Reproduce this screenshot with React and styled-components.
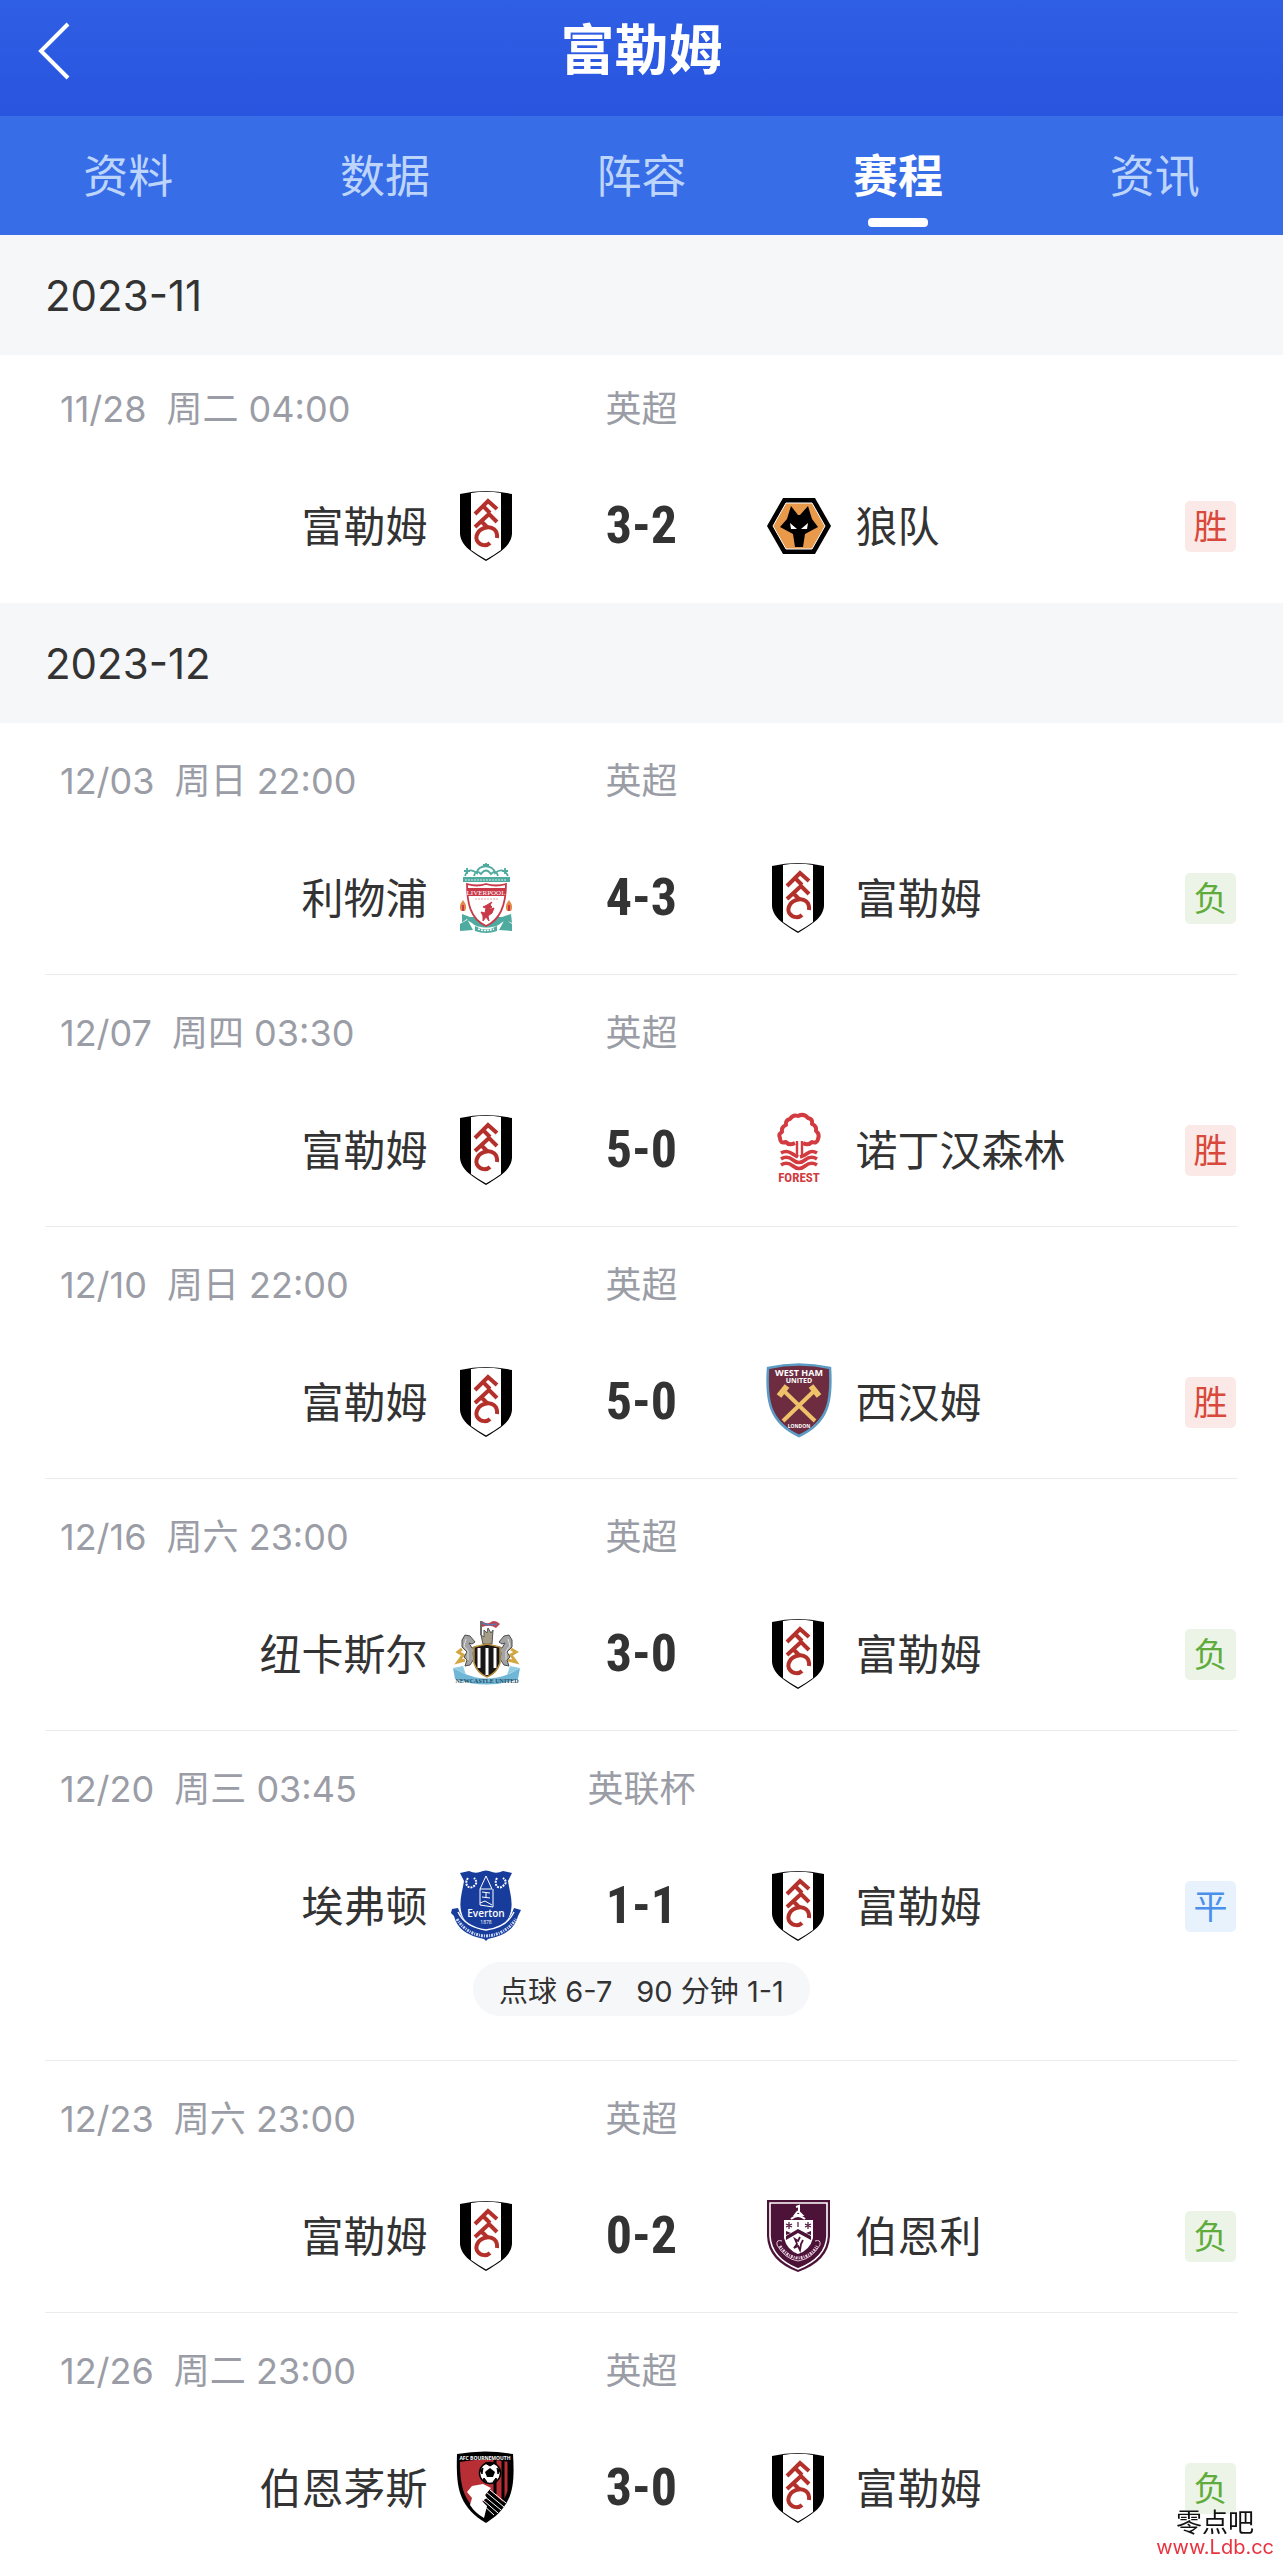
import React, { useState } from 'react'
import styled, { createGlobalStyle } from 'styled-components'

const tabs = ['资料', '数据', '阵容', '赛程', '资讯']

const months = [
  {
    month: '2023-11',
    matches: [
      { date: '11/28', time: '周二 04:00', league: '英超', home: 'fulham', away: 'wolves', score: '3-2', result: 'win' },
    ],
  },
  {
    month: '2023-12',
    matches: [
      { date: '12/03', time: '周日 22:00', league: '英超', home: 'liverpool', away: 'fulham', score: '4-3', result: 'lose' },
      { date: '12/07', time: '周四 03:30', league: '英超', home: 'fulham', away: 'forest', score: '5-0', result: 'win' },
      { date: '12/10', time: '周日 22:00', league: '英超', home: 'fulham', away: 'westham', score: '5-0', result: 'win' },
      { date: '12/16', time: '周六 23:00', league: '英超', home: 'newcastle', away: 'fulham', score: '3-0', result: 'lose' },
      { date: '12/20', time: '周三 03:45', league: '英联杯', home: 'everton', away: 'fulham', score: '1-1', result: 'draw', notes: ['点球 6-7', '90 分钟 1-1'] },
      { date: '12/23', time: '周六 23:00', league: '英超', home: 'fulham', away: 'burnley', score: '0-2', result: 'lose' },
      { date: '12/26', time: '周二 23:00', league: '英超', home: 'bournemouth', away: 'fulham', score: '3-0', result: 'lose' },
    ],
  },
]

const results = {
  win: { text: '胜', color: '#d8493c', bg: '#fbe9e7' },
  lose: { text: '负', color: '#5fab3c', bg: '#ebf4e7' },
  draw: { text: '平', color: '#4a90ea', bg: '#e8f2fd' },
}

const Fulham = () => (
  <StLogo viewBox="0 0 72 72" aria-hidden="true">
    <path d="M10 4Q36-2 62 4V44C61 56 49 63 36 71C23 63 11 56 10 44Z" fill="#000" />
    <path d="M21 3Q36 .5 51 3V60Q44 65 36 69.5Q28 65 21 60Z" fill="#fff" />
    <g fill="none" stroke="#b3312a" strokeWidth="4">
      <path d="M25 24L38 11L47 19M33 16L40 23" />
      <path d="M25 37L39 24L47 32M31 31L38 38" />
      <path d="M47 48C48 40 42 36 36 37.5C28 39 24 47 28 52C31 56 37 56 40 53" />
    </g>
  </StLogo>
)

const Wolves = () => (
  <StLogo viewBox="0 0 72 72" aria-hidden="true">
    <path d="M21 8H53L69 36L53 64H21L5 36Z" fill="#000" />
    <path d="M24 13H50L63 36L50 59H24L11 36Z" fill="#e9994a" stroke="#fff" />
    <path d="M29 16L36 25H38L46 16L50 29L56 37L43 44L41 57H33L31 44L18 37L25 29Z" fill="#000" />
    <path d="M28 33L35 39H29ZM46 33L39 39H45Z" fill="#fff" />
  </StLogo>
)

const Liverpool = () => (
  <StLogo viewBox="0 0 72 72" aria-hidden="true">
    <g fill="none" stroke="#4fab9f" strokeWidth="1.8">
      <path d="M15 14C18 5 24 9 27 11C27 2 44 2 45 11C49 8 54 6 58 14" />
      <path d="M36 1V5M33 3H39M17 6V12M14 9H20M55 6V12M52 9H58" />
      <path d="M24 14Q26 7 31 12Q36 5 41 12Q46 7 48 14" />
    </g>
    <path d="M13 15H60V20H13Z" fill="#4fab9f" />
    <path d="M15 18H57" stroke="#d7eeea" strokeDasharray="2 1" />
    <path d="M12 52V61L17 58L22 61C27 67 46 67 51 61L56 58L62 61L61 52L52 55L20 55ZM10 62L17 57L23 68L10 69ZM62 62L55 57L49 68L62 69Z" fill="#4fab9f" />
    <path d="M17 22Q27 25 36 22Q46 25 56 22C56 40 52 57 36 64C20 57 17 40 17 22Z" fill="#fff" stroke="#c93848" strokeWidth="1.8" />
    <path d="M18 26H55V34H18Z" fill="#c93848" />
    <text x="36" y="33" textAnchor="middle" fontSize="7" fontFamily="Liberation Serif, serif" fill="#fff">LIVERPOOL</text>
    <path d="M25 37H48" stroke="#e7a1a8" strokeDasharray="2 1" />
    <path d="M42 40L40 43L42 45L38 48L44 46L42 51L38 54L39 59L36 55L33 59L33 54L31 50L35 51L36 46L33 45L37 43Z" fill="#c93848" stroke="#c93848" />
    <path d="M13 38Q18 44 15 49H11Q8 44 13 38ZM59 38Q64 44 61 49H57Q54 44 59 38Z" fill="#e48a49" />
    <path d="M13 43V49M59 43V49" stroke="#c93848" strokeWidth="2" />
    <path d="M25 64Q36 71 47 64V69Q36 73 25 69Z" fill="#4fab9f" />
    <path d="M28 67Q36 70 44 67" fill="none" stroke="#fff" strokeWidth="1.5" strokeDasharray="2 1" />
  </StLogo>
)

const Forest = () => (
  <StLogo viewBox="0 0 72 72" aria-hidden="true">
    <g fill="none" stroke="#d23b40">
      <path d="M33 29Q27 32 24 28Q18 30 18 24Q16 20 20 18Q19 13 24 11Q23 6 28 5Q31 0 36 2Q42-1 46 4Q51 5 50 10Q55 12 54 17Q58 20 56 25Q55 30 50 28Q46 32 41 29" strokeWidth="4" strokeLinejoin="round" />
      <path d="M35 27V43M40 27V43" strokeWidth="2.4" />
      <path d="M19 39Q24 36 29 39T36 43M55 39Q50 36 46 39T38 43" strokeWidth="3.6" />
      <path d="M19 45Q25 41 31 46T43 46T55 45M19 51Q25 47 31 52T43 52T55 51" strokeWidth="3.6" />
    </g>
    <text x="37" y="68" textAnchor="middle" fontSize="13" fontWeight="700" fontFamily="'Roboto Condensed', Roboto, sans-serif" fill="#d23b40">FOREST</text>
  </StLogo>
)

const WestHam = () => (
  <StLogo viewBox="0 0 72 72" aria-hidden="true">
    <path d="M6 2Q37-5 68 2C70 34 67 56 37 70C7 56 4 34 6 2Z" fill="#6d2c40" stroke="#5c9cc4" strokeWidth="2.5" />
    <g fontFamily="'Open Sans', sans-serif" fontWeight="700" fill="#fff" textAnchor="middle">
      <text x="37" y="10" fontSize="9">WEST HAM</text>
      <text x="37" y="17" fontSize="7">UNITED</text>
      <text x="37" y="62" fontSize="5">LONDON</text>
    </g>
    <g stroke="#edc268" fill="none">
      <path d="M23 26L53 55M51 26L21 55" strokeWidth="4" />
      <path d="M17 30L25 20M49 20L57 30" strokeWidth="6" />
    </g>
  </StLogo>
)

const Newcastle = () => (
  <StLogo viewBox="0 0 72 72" aria-hidden="true">
    <path d="M31 3V17" stroke="#3b3b3b" strokeWidth="1.5" />
    <path d="M32 3Q37 7 41 4T50 6L46 10Q40 6 32 9Z" fill="#c04450" />
    <path d="M32 5Q39 8 47 6" fill="none" stroke="#5a78ae" strokeWidth="1.5" />
    <path d="M33 26L31 17L34 19V12L37 15L38 10L41 15L43 12L42 26Z" fill="#a79e8a" stroke="#555" />
    <path d="M12 31L8 34L13 37L8 44L15 42M61 31L66 34L61 37L66 44L58 42" fill="none" stroke="#d2a742" strokeWidth="3" />
    <g fill="#a3a3a3" stroke="#4d4d4d">
      <path d="M15 17L20 18L25 24L22 26L19 25L22 30L27 29L23 35L24 41L20 47L15 48L17 42L14 39L17 34L12 29L12 22Z" />
      <path d="M59 17L54 18L49 24L52 26L55 25L52 30L47 29L51 35L50 41L54 47L59 48L57 42L60 39L57 34L62 29L62 22Z" />
    </g>
    <path d="M16 21L14 28L18 33L18 42M58 21L60 28L56 33L56 42" fill="none" stroke="#e2e2e2" />
    <path d="M3 50L13 55Q37 66 61 55L70 50L68 61Q37 72 5 61Z" fill="#6fb6d7" />
    <path d="M3 50L13 48L16 57ZM70 50L60 48L57 57Z" fill="#91cce3" />
    <path d="M24 29L37 26L50 29V45Q47 55 37 59Q27 55 24 45Z" fill="#171717" stroke="#b88d3b" strokeWidth="1.5" />
    <path d="M29 30V50M37 30V57M45 30V50" stroke="#fff" strokeWidth="3" />
    <text x="37" y="65" textAnchor="middle" fontSize="6" fontFamily="Liberation Serif, serif" fontWeight="700" fill="#24495b">NEWCASTLE UNITED</text>
  </StLogo>
)

const Everton = () => (
  <StLogo viewBox="0 0 72 72" aria-hidden="true">
    <path d="M10 3L19 1Q25 4 30 2Q36-1 42 2Q47 4 53 1L62 3L58 11C60 24 65 36 58 49Q51 60 36 63Q21 60 14 49C7 36 12 24 14 11Z" fill="#173c9b" />
    <path d="M2 39L8 38Q14 58 36 61Q58 58 64 38L71 40L68 46Q64 64 38 69L36 71L34 69Q8 64 4 46L1 43Z" fill="#173c9b" />
    <path d="M8 42Q15 57 36 60Q57 57 64 42" fill="none" stroke="#fff" strokeWidth="1.4" />
    <path d="M7 49Q17 65 36 66Q55 65 66 49" fill="none" stroke="#c9d6f5" strokeWidth="3" strokeDasharray="2 1 1 1" />
    <g fill="none" stroke="#fff">
      <path d="M18 8C13 15 20 21 25 15Q28 12 24 8M47 8C43 15 49 21 54 15Q58 12 53 8" strokeDasharray="2 1" strokeWidth="2" />
      <path d="M36 6L30 19H42ZM30 19V35L43 37V19M30 33L35 31L42 35M36 22V28M32 22L40 23M32 27L40 28" />
    </g>
    <text x="36" y="47" textAnchor="middle" fontSize="10" fontFamily="'Open Sans', sans-serif" fontWeight="600" fill="#fff">Everton</text>
    <text x="36" y="54" textAnchor="middle" fontSize="5" fontFamily="'Open Sans', sans-serif" fill="#fff">1878</text>
  </StLogo>
)

const Burnley = () => (
  <StLogo viewBox="0 0 72 72" aria-hidden="true">
    <path d="M5 0H68V36Q67 61 36 72Q6 61 5 36Z" fill="#4d1238" />
    <path d="M8 3H65V36Q64 58 36 69Q9 58 8 36Z" fill="none" stroke="#fff" strokeWidth="1.6" />
    <path d="M22 20H51V38Q48 50 36 54Q25 50 22 38Z" fill="#fff" />
    <path d="M34 7L37 6L37 12L40 15H33L36 11M29 19Q36 13 43 19" fill="none" stroke="#fff" strokeWidth="2" />
    <path d="M27 22V29M24 24L30 27M30 24L24 27M46 22V29M43 24L49 27M49 24L43 27M36 22V27" stroke="#4d1238" strokeWidth="1.2" />
    <path d="M24 40V36L36 29L49 36V40L36 33Z" fill="#4d1238" />
    <path d="M24 31L29 33L24 35ZM49 31L44 33L49 35Z" fill="#4d1238" />
    <path d="M38 37L36 41L33 39L35 44L32 48L36 46L38 50L39 44L41 40" fill="none" stroke="#4d1238" strokeWidth="1.8" />
    <path d="M20 41Q14 39 15 45Q23 59 36 61Q50 59 58 45Q59 39 53 41" fill="none" stroke="#e3c9d9" />
    <path d="M18 46Q25 57 36 58Q49 57 55 46" fill="none" stroke="#e3c9d9" strokeWidth="3" strokeDasharray="2 1 1 1" />
  </StLogo>
)

const Bournemouth = () => (
  <StLogo viewBox="0 0 72 72" aria-hidden="true">
    <path d="M7 2Q35-3 63 2C65 35 63 54 36 71C8 54 6 35 7 2Z" fill="#000" />
    <path d="M10 10Q35 5 60 10C61 34 58 51 36 66C13 51 10 34 10 10Z" fill="#b82e35" />
    <path d="M45 8V42M53 8V48M59 9V38" stroke="#000" strokeWidth="3" />
    <path d="M38 36L55 52L36 67L30 61Z" fill="#000" />
    <path d="M36 40L54 55M34 44L51 58M33 48L48 61M32 52L44 63M40 38L56 51" stroke="#fff" />
    <path d="M17 40L22 34L33 32L41 36L35 43L37 46L32 49L37 54L34 66Q25 61 20 53L22 46Z" fill="#fff" />
    <circle cx="40" cy="21" r="10.5" fill="#fff" stroke="#000" strokeWidth="1.5" />
    <path d="M40 16L45 20L43 25H37L35 20Z" fill="#000" />
    <path d="M35 11L40 14L45 11ZM30 18L33 16L32 22ZM50 18L47 16L48 22ZM33 28L37 30L34 26ZM47 28L43 30L46 26Z" fill="#000" stroke="#000" />
    <text x="35" y="8" textAnchor="middle" fontSize="5" fontWeight="700" fontFamily="'Open Sans', sans-serif" fill="#fff">AFC BOURNEMOUTH</text>
  </StLogo>
)

const teams = {
  fulham: { name: '富勒姆', Logo: Fulham },
  wolves: { name: '狼队', Logo: Wolves },
  liverpool: { name: '利物浦', Logo: Liverpool },
  forest: { name: '诺丁汉森林', Logo: Forest },
  westham: { name: '西汉姆', Logo: WestHam },
  newcastle: { name: '纽卡斯尔', Logo: Newcastle },
  everton: { name: '埃弗顿', Logo: Everton },
  burnley: { name: '伯恩利', Logo: Burnley },
  bournemouth: { name: '伯恩茅斯', Logo: Bournemouth },
}

const Match = ({ match, first }) => {
  const home = teams[match.home]
  const away = teams[match.away]
  const result = results[match.result]

  return (
    <StMatch $first={first}>
      <StMeta>
        <StDate>
          <span>{match.date}</span>
          <span>{match.time}</span>
        </StDate>
        <StLeague>{match.league}</StLeague>
      </StMeta>
      <StTeams>
        <StHome>
          <StName>{home.name}</StName>
          <home.Logo />
        </StHome>
        <StScore>{match.score}</StScore>
        <StAway>
          <away.Logo />
          <StName>{away.name}</StName>
          <StBadge $color={result.color} $bg={result.bg}>{result.text}</StBadge>
        </StAway>
      </StTeams>
      {match.notes && (
        <StNote>
          {match.notes.map((note) => <span key={note}>{note}</span>)}
        </StNote>
      )}
    </StMatch>
  )
}

const App = () => {
  const [active, setActive] = useState('赛程')

  return (
    <>
      <GlobalStyle />
      <StHeader>
        <StBack type="button" aria-label="返回">
          <svg width="34" height="58" viewBox="0 0 34 58" fill="none" stroke="#fff" strokeWidth="4">
            <path d="M31 2L4 29L31 56" />
          </svg>
        </StBack>
        <h1>富勒姆</h1>
      </StHeader>
      <StTabs>
        {tabs.map((tab) => (
          <StTab key={tab} type="button" $active={tab === active} onClick={() => setActive(tab)}>
            {tab}
          </StTab>
        ))}
      </StTabs>
      <main>
        {months.map((group, i) => (
          <section key={group.month}>
            <StMonth>{group.month}</StMonth>
            <StList>
              {group.matches.map((match) => (
                <Match key={match.date} match={match} first={i === 0} />
              ))}
            </StList>
          </section>
        ))}
      </main>
      <StMark>
        <span>零点吧</span>
        <StMarkUrl>www.Ldb.cc</StMarkUrl>
      </StMark>
    </>
  )
}

export default App


const GlobalStyle = createGlobalStyle`
  * {
    box-sizing: border-box;
  }
  body {
    margin: 0;
    background-color: #fff;
    color: #333;
    font-family: Inter, 'Noto Sans CJK SC', sans-serif;
  }
  button {
    padding: 0;
    border: none;
    background: none;
    font-family: inherit;
    cursor: pointer;
  }
`
const StHeader = styled.header`
  display: grid;
  grid-template-columns: 80px 1fr 80px;
  align-items: center;
  height: 116px;
  padding-bottom: 14px;
  background: linear-gradient(#2f5fe4, #2954df);
  color: #fff;
  h1 {
    margin: 0;
    text-align: center;
    font-size: 54px;
    line-height: 72px;
    font-weight: 700;
  }
`
const StBack = styled.button`
  display: flex;
  justify-content: flex-end;
  padding-right: 9px;
`
const StTabs = styled.nav`
  display: flex;
  height: 119px;
  background-color: #386de8;
`
const StTab = styled.button`
  position: relative;
  flex: 1;
  padding-bottom: 4px;
  font-size: 45px;
  color: ${({ $active }) => ($active ? '#fff' : '#bdd5fb')};
  font-weight: ${({ $active }) => ($active ? 700 : 400)};
  &::after {
    content: '';
    display: ${({ $active }) => ($active ? 'block' : 'none')};
    position: absolute;
    left: 50%;
    bottom: 8px;
    width: 60px;
    height: 9px;
    margin-left: -30px;
    border-radius: 4px;
    background-color: #fff;
  }
`
const StMonth = styled.h2`
  display: flex;
  align-items: center;
  height: 120px;
  margin: 0;
  padding: 0 45px;
  background-color: #f6f7f9;
  font-size: 42px;
  font-weight: 400;
`
const StList = styled.ul`
  margin: 0;
  padding: 0 45px;
  list-style: none;
`
const StMatch = styled.li`
  padding: ${({ $first }) => ($first ? 30 : 34)}px 0 40px;
  border-bottom: 1px solid #ececee;
  &:last-child {
    border-bottom: none;
    padding-bottom: ${({ $first }) => ($first ? 41 : 30)}px;
  }
`
const StMeta = styled.div`
  display: grid;
  grid-template-columns: 1fr 240px 1fr;
  margin-bottom: 57px;
  line-height: 48px;
  font-size: 36px;
  color: #9b9da6;
`
const StDate = styled.div`
  display: flex;
  gap: 20px;
  padding-left: 15px;
  white-space: nowrap;
`
const StLeague = styled.div`
  text-align: center;
`
const StTeams = styled.div`
  display: grid;
  grid-template-columns: 1fr 240px 1fr;
  align-items: center;
  height: 72px;
  font-size: 42px;
`
const StHome = styled.div`
  display: flex;
  justify-content: flex-end;
  align-items: center;
  gap: 22px;
`
const StAway = styled.div`
  display: flex;
  align-items: center;
  gap: 22px;
`
const StName = styled.span`
  padding-bottom: 6px;
  white-space: nowrap;
`
const StLogo = styled.svg`
  flex: none;
  width: 72px;
  height: 72px;
  overflow: visible;
`
const StScore = styled.strong`
  text-align: center;
  font-family: 'Roboto Condensed', Roboto, sans-serif;
  font-size: 52px;
  line-height: 72px;
  font-weight: 700;
`
const StBadge = styled.span`
  display: flex;
  justify-content: center;
  align-items: center;
  width: 51px;
  height: 51px;
  margin-left: auto;
  margin-right: 2px;
  padding-bottom: 3px;
  border-radius: 5px;
  background-color: ${({ $bg }) => $bg};
  color: ${({ $color }) => $color};
  font-size: 34px;
`
const StNote = styled.div`
  display: flex;
  justify-content: center;
  align-items: center;
  gap: 24px;
  width: fit-content;
  height: 54px;
  margin: 20px auto 4px;
  padding: 0 26px;
  border-radius: 27px;
  background-color: #f6f7f9;
  font-size: 29px;
`
const StMark = styled.div`
  position: fixed;
  right: 9px;
  bottom: 0;
  display: flex;
  flex-direction: column;
  align-items: center;
  font-size: 26px;
  line-height: 24px;
  color: #111;
`
const StMarkUrl = styled.span`
  font-size: 20px;
  color: #e9333f;
`
